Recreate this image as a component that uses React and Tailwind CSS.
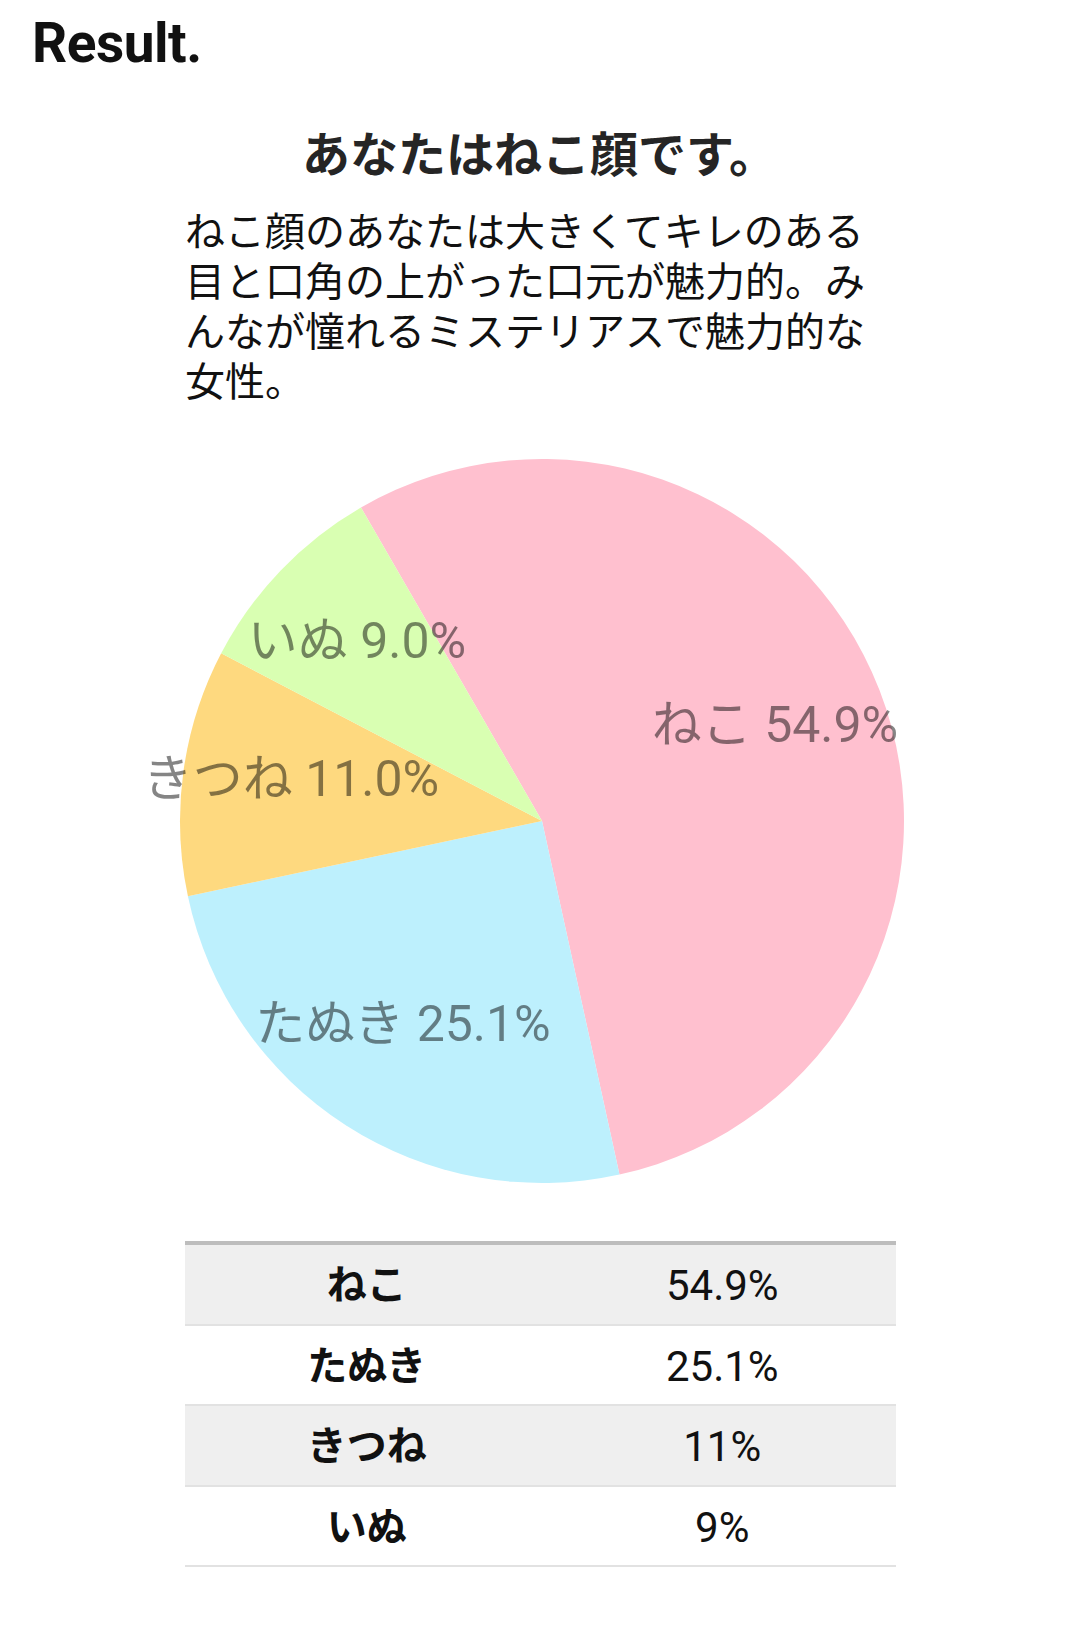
import React from "react";

const CX = 542;
const CY = 821;
const R = 362;

const slices = [
  { name: "ねこ", pct: 54.9, color: "#ffc0cf" },
  { name: "たぬき", pct: 25.1, color: "#bdf0fd" },
  { name: "きつね", pct: 11.0, color: "#fed97f" },
  { name: "いぬ", pct: 9.0, color: "#d9ffb2" },
];

const labels = [
  { text: "ねこ 54.9%", x: 775, y: 742 },
  { text: "たぬき 25.1%", x: 403, y: 1041 },
  { text: "きつね 11.0%", x: 291, y: 796 },
  { text: "いぬ 9.0%", x: 357, y: 658 },
];

function pt(deg) {
  const a = (deg * Math.PI) / 180;
  return [CX + R * Math.sin(a), CY - R * Math.cos(a)];
}

function slicePaths() {
  let start = -30;
  return slices.map((s) => {
    const sweep = (s.pct / 100) * 360;
    const end = start + sweep;
    const [x1, y1] = pt(start);
    const [x2, y2] = pt(end);
    const large = sweep > 180 ? 1 : 0;
    const d = `M ${CX} ${CY} L ${x1} ${y1} A ${R} ${R} 0 ${large} 1 ${x2} ${y2} Z`;
    start = end;
    return { d, color: s.color };
  });
}

const rows = [
  { name: "ねこ", value: "54.9%" },
  { name: "たぬき", value: "25.1%" },
  { name: "きつね", value: "11%" },
  { name: "いぬ", value: "9%" },
];

export default function App() {
  const paths = slicePaths();
  return (
    <div className="w-[1079px] min-h-[1629px] bg-white text-black">
      <div className="font-['Roboto','Noto_Sans_CJK_JP',sans-serif]">
        <div className="pl-[32px] pt-[10px] text-[55px] leading-[66px] font-bold tracking-[-0.5px] text-[#111]">
          Result.
        </div>

        <h2 className="mt-[44px] text-center text-[48px] leading-[72px] font-bold text-[#252525]">
          あなたはねこ顔です。
        </h2>

        <p className="mt-[16px] ml-[185px] w-[710px] text-[40px] leading-[50px] text-[#111]">
          ねこ顔のあなたは大きくてキレのある目と口角の上がった口元が魅力的。みんなが憧れるミステリアスで魅力的な女性。
        </p>

        <svg
          className="block mt-[12px]"
          width="1079"
          height="800"
          viewBox="0 420 1079 800"
        >
          {paths.map((p, i) => (
            <path key={i} d={p.d} fill={p.color} />
          ))}
          {labels.map((l, i) => (
            <text
              key={i}
              x={l.x}
              y={l.y}
              textAnchor="middle"
              fontSize="50"
              fill="#000000"
              fillOpacity="0.48"
              fontFamily="Roboto, 'Noto Sans CJK JP', sans-serif"
            >
              {l.text}
            </text>
          ))}
        </svg>

        <div className="mt-[21px] ml-[185px] w-[711px] border-t-4 border-[#bdbdbd]">
          {rows.map((r, i) => (
            <div
              key={i}
              className={`grid grid-cols-2 h-[80.5px] items-center border-b-2 border-[#e2e2e2] ${
                i % 2 === 0 ? "bg-[#efefef]" : "bg-white"
              }`}
            >
              <div className="text-center text-[40px] leading-[48px] font-bold text-[#111] pt-[4px] pl-[8px]">{r.name}</div>
              <div className="text-center text-[42px] leading-[48px] text-[#111] pt-[4px] pl-[8px]">{r.value}</div>
            </div>
          ))}
        </div>
      </div>
    </div>
  );
}
